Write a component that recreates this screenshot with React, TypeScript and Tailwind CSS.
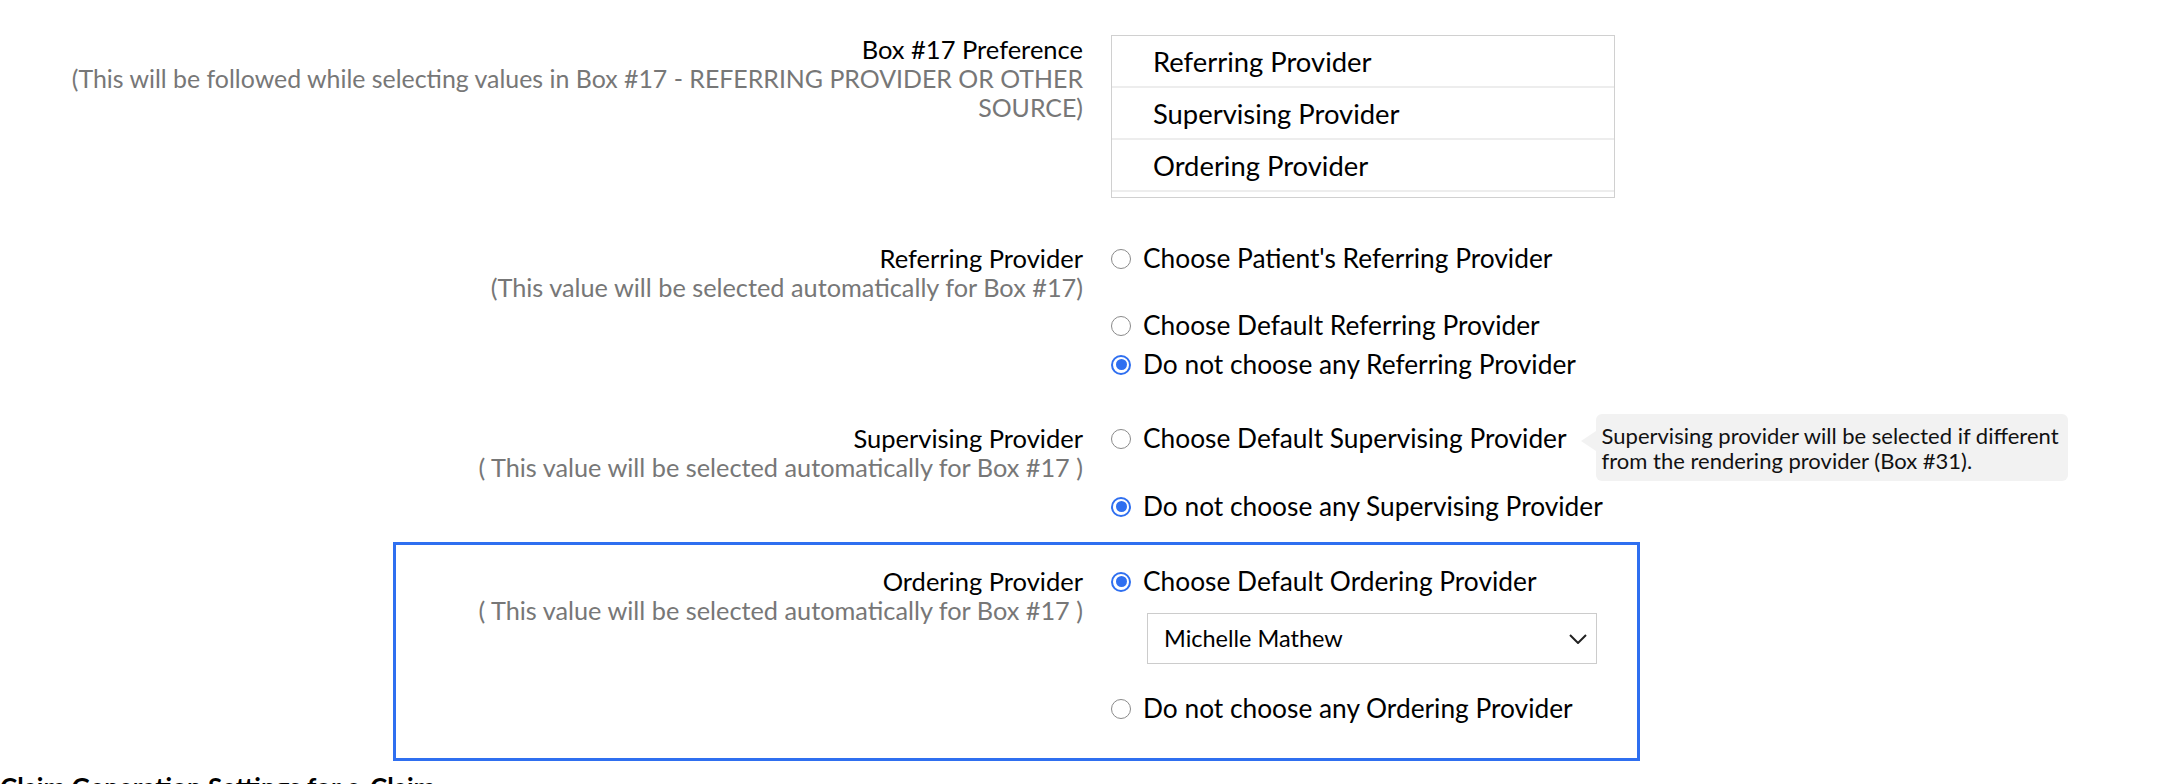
import type { ReactNode } from "react";

function Radio({ checked }: { checked?: boolean }) {
  if (checked) {
    return (
      <span className="flex h-[20px] w-[20px] shrink-0 items-center justify-center rounded-full border-2 border-[#2f6ff0] bg-white">
        <span className="h-[11px] w-[11px] rounded-full bg-[#2f6ff0]" />
      </span>
    );
  }
  return (
    <span className="h-[20px] w-[20px] shrink-0 rounded-full border-[1.5px] border-[#8a8a8a] bg-white" />
  );
}

function Option({
  checked,
  children,
  tip,
  className = "",
}: {
  checked?: boolean;
  children: ReactNode;
  tip?: ReactNode;
  className?: string;
}) {
  return (
    <label className={`flex h-[29px] items-center gap-[12px] text-[26.3px] leading-[29px] ${className}`}>
      <Radio checked={checked} />
      <span className="relative">
        {children}
        {tip}
      </span>
    </label>
  );
}

function Label({
  title,
  hint,
  width,
  hintSize = "text-[25.3px]",
}: {
  title: string;
  hint: ReactNode;
  width: string;
  hintSize?: string;
}) {
  return (
    <div className={`${width} shrink-0 text-right leading-[29px]`}>
      <div className="text-[25.5px] text-black">{title}</div>
      <div className={`${hintSize} text-[#777777]`}>{hint}</div>
    </div>
  );
}

export default function App() {
  return (
    <div className="relative h-[784px] w-[2176px] overflow-hidden bg-white pt-[35px] font-['Lato',sans-serif] text-black">
      {/* Box 17 preference */}
      <div className="flex">
        <Label
          width="w-[1083px]"
          hintSize="text-[24.9px]"
          title="Box #17 Preference"
          hint={
            <>
              (This will be followed while selecting values in Box #17 - REFERRING PROVIDER OR OTHER
              <br />
              SOURCE)
            </>
          }
        />
        <div className="ml-[28px] h-[163px] w-[504px] overflow-hidden border border-[#d0d0d0] text-[27.4px]">
          {["Referring Provider", "Supervising Provider", "Ordering Provider"].map((item) => (
            <div
              key={item}
              className="flex h-[52px] items-center border-b-2 border-[#ededed] pt-[2px] pl-[41px]"
            >
              {item}
            </div>
          ))}
        </div>
      </div>

      {/* Referring provider */}
      <div className="mt-[46px] flex">
        <Label
          width="w-[1083px]"
          title="Referring Provider"
          hint="(This value will be selected automatically for Box #17)"
        />
        <div className="ml-[28px]">
          <Option>Choose Patient's Referring Provider</Option>
          <Option className="mt-[38px]">Choose Default Referring Provider</Option>
          <Option checked className="mt-[10px]">
            Do not choose any Referring Provider
          </Option>
        </div>
      </div>

      {/* Supervising provider */}
      <div className="mt-[45px] flex">
        <Label
          width="w-[1083px]"
          title="Supervising Provider"
          hint="( This value will be selected automatically for Box #17 )"
        />
        <div className="ml-[28px]">
          <Option
            tip={
              <span className="absolute top-[-10px] left-[calc(100%+14px)] flex items-start">
                <span className="mt-[17px] h-0 w-0 border-y-[10px] border-r-[15px] border-y-transparent border-r-[#f2f2f2]" />
                <span className="w-[472px] rounded-[6px] bg-[#f2f2f2] px-[6px] pt-[9px] pb-[8px] text-[22px] leading-[25px] whitespace-nowrap text-[#111]">
                  Supervising provider will be selected if different
                  <br />
                  from the rendering provider (Box #31).
                </span>
              </span>
            }
          >
            Choose Default Supervising Provider
          </Option>
          <Option checked className="mt-[39px]">
            Do not choose any Supervising Provider
          </Option>
        </div>
      </div>

      {/* Ordering provider (highlighted) */}
      <div className="mt-[21px] ml-[393px] flex w-[1247px] border-[3px] border-[#2f6ff0] pt-[22px] pb-[35px]">
        <Label
          width="w-[687px]"
          title="Ordering Provider"
          hint="( This value will be selected automatically for Box #17 )"
        />
        <div className="ml-[28px]">
          <Option checked>Choose Default Ordering Provider</Option>
          <div className="mt-[17px] ml-[36px] flex h-[51px] w-[450px] items-center justify-between border border-[#cccccc] pr-[9px] pl-[16px] text-[23.5px]">
            <span>Michelle Mathew</span>
            <svg width="18" height="10" viewBox="0 0 18 10" fill="none">
              <polyline points="1,1 9,9 17,1" stroke="#222" strokeWidth="2" />
            </svg>
          </div>
          <Option className="mt-[30px]">Do not choose any Ordering Provider</Option>
        </div>
      </div>

      <h2 className="mt-[12px] text-[26px] leading-[29px] font-bold">
        Claim Generation Settings for e-Claim
      </h2>
    </div>
  );
}
